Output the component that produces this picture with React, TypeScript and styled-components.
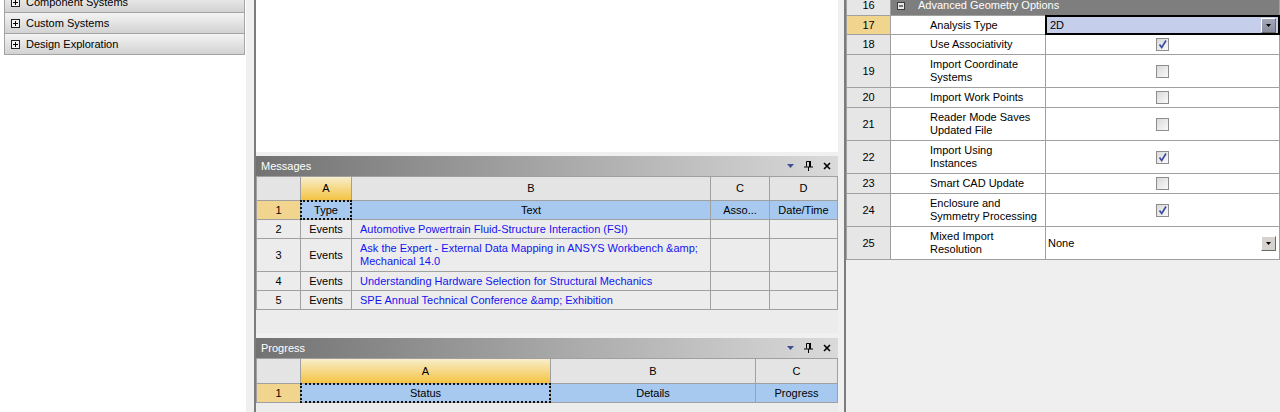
import React from 'react';
import styled, { createGlobalStyle, css } from 'styled-components';

const GlobalStyle = createGlobalStyle`
  html, body {
    margin: 0;
    padding: 0;
    background: #f0f0f0;
  }
  body {
    font-family: 'Liberation Sans', Arial, sans-serif;
    font-size: 11px;
    color: #000;
  }
`;

const GRID_LINE = '#a0a0a0';

const Screen = styled.div`
  display: flex;
  width: 1280px;
  height: 412px;
  overflow: hidden;
  background: #f0f0f0;
`;

/* ---------- toolbox ---------- */

const Toolbox = styled.aside`
  flex: none;
  width: 246px;
  padding-left: 4px;
  box-sizing: border-box;
  background: #fff;
`;

const ToolboxList = styled.div`
  display: flex;
  flex-direction: column;
  width: 241px;
  margin-top: -9px;
`;

const ToolboxGroup = styled.div`
  display: flex;
  align-items: center;
  gap: 6px;
  height: 20px;
  padding-left: 6px;
  border: 1px solid #a3a3a3;
  background: linear-gradient(#f4f4f4, #d2d2d2);

  & + & {
    margin-top: -1px;
  }
`;

/* ---------- centre column ---------- */

const Workspace = styled.main`
  flex: none;
  display: flex;
  flex-direction: column;
  width: 584px;
  margin-left: 8px;
  border-left: 2px solid #7c7c7c;
  box-sizing: border-box;
`;

const Canvas = styled.div`
  flex: none;
  height: 152px;
  background: #fff;
`;

const Pane = styled.section<{ $height?: number; $gap: number }>`
  display: flex;
  flex-direction: column;
  margin-top: ${(p) => p.$gap}px;
  background: #ececec;
  ${(p) =>
    p.$height
      ? css`
          flex: none;
          height: ${p.$height}px;
        `
      : css`
          flex: 1;
        `}
`;

const PaneTitle = styled.header`
  flex: none;
  display: flex;
  align-items: center;
  height: 20px;
  padding: 0 7px 0 5px;
  color: #fff;
  font-size: 11px;
  background: linear-gradient(to right, #727272, #dadada);
`;

const PaneName = styled.span`
  flex: 1;
`;

const PaneTools = styled.div`
  display: flex;
  align-items: center;
  gap: 10px;
`;

/* ---------- sheets ---------- */

const Sheet = styled.div<{ $cols: string; $rows: string }>`
  display: grid;
  grid-template-columns: ${(p) => p.$cols};
  grid-template-rows: ${(p) => p.$rows};
  gap: 1px;
  background: ${GRID_LINE};
  border: 1px solid ${GRID_LINE};
`;

type Tone = 'head' | 'headSel' | 'num' | 'numSel' | 'sel' | 'data' | 'white' | 'group';

const tones: Record<Tone, string> = {
  head: '#e4e4e4',
  headSel: 'linear-gradient(#f8eecb, #f4c343)',
  num: '#e6e6e6',
  numSel: '#f1d58f',
  sel: '#a7c9ef',
  data: '#ececec',
  white: '#fff',
  group: '#7e7e7e',
};

const Cell = styled.div<{ $tone: Tone; $align?: 'left' | 'center'; $pad?: number; $focus?: boolean }>`
  display: flex;
  align-items: center;
  justify-content: ${(p) => (p.$align === 'left' ? 'flex-start' : 'center')};
  padding-left: ${(p) => p.$pad ?? 0}px;
  min-width: 0;
  overflow: hidden;
  white-space: nowrap;
  line-height: 13px;
  background: ${(p) => tones[p.$tone]};
  color: ${(p) => (p.$tone === 'group' ? '#fff' : '#000')};
  ${(p) =>
    p.$focus &&
    css`
      overflow: visible;
      outline: 2px dotted #111;
      outline-offset: -1px;
    `}
`;

const Link = styled.span`
  color: #1414f0;
`;

/* ---------- property inspector ---------- */

const Inspector = styled.aside`
  flex: 1;
  margin-left: 6px;
  border-left: 2px solid #7c7c7c;
  background: #efefef;
`;

const PropSheet = styled(Sheet)`
  margin-top: -5px;
`;

const GroupCell = styled(Cell)`
  grid-column: span 2;
  gap: 13px;
`;

const ValueCell = styled.div<{ $active?: boolean; $align: 'left' | 'center' }>`
  display: flex;
  align-items: center;
  justify-content: ${(p) => (p.$align === 'left' ? 'space-between' : 'center')};
  padding: 0 3px 0 ${(p) => (p.$active ? 4 : 2)}px;
  background: ${(p) => (p.$active ? '#c5cfeb' : '#fff')};
  ${(p) =>
    p.$active &&
    css`
      outline: 2px solid #000;
      outline-offset: -1px;
    `}
`;

const DropButton = styled.span<{ $dark?: boolean }>`
  display: flex;
  align-items: center;
  justify-content: center;
  width: 13px;
  height: 13px;
  border: 1px solid;
  border-color: #fff #6a6a6a #6a6a6a #fff;
  background: ${(p) => (p.$dark ? 'linear-gradient(#a5a8b8, #8b8e9e)' : '#d6d3ce')};
`;

const CheckBox = styled.span`
  display: flex;
  align-items: center;
  justify-content: center;
  width: 11px;
  height: 11px;
  border: 1px solid #8d8d8d;
  background: linear-gradient(135deg, #d9d9d9, #fafafa);
`;

/* ---------- icons ---------- */

const PlusBox = () => (
  <svg width="9" height="9" viewBox="0 0 9 9">
    <rect x="0.5" y="0.5" width="8" height="8" fill="#f4f4f4" stroke="#222" />
    <path d="M2 4.5h5M4.5 2v5" stroke="#000" />
  </svg>
);

const MinusBox = () => (
  <svg width="8" height="8" viewBox="0 0 8 8">
    <rect x="0.5" y="0.5" width="7" height="7" fill="#e8e8e8" stroke="#3c3c3c" />
    <path d="M2 4h4" stroke="#000" />
  </svg>
);

const MenuArrow = () => (
  <svg width="7" height="4" viewBox="0 0 7 4">
    <path d="M0 0h7L3.5 4z" fill="#3f4f93" />
  </svg>
);

const Pin = () => (
  <svg width="9" height="10" viewBox="0 0 9 10">
    <path d="M2.5 0.5h3.5v5M2.5 0.5v5M0 6h9M4.5 6v4" stroke="#000" fill="none" />
    <path d="M5 0v6h2V0z" fill="#000" />
  </svg>
);

const Close = () => (
  <svg width="8" height="8" viewBox="0 0 8 8">
    <path d="M1 1l6 6M7 1L1 7" stroke="#000" strokeWidth="1.6" />
  </svg>
);

const SmallArrow = () => (
  <svg width="5" height="3" viewBox="0 0 5 3">
    <path d="M0 0h5L2.5 3z" fill="#000" />
  </svg>
);

const Check = () => (
  <svg width="11" height="11" viewBox="0 0 11 11">
    <path d="M2.5 5.5l2.2 3L9 1.5" stroke="#3a4aa2" strokeWidth="1.6" fill="none" />
  </svg>
);

/* ---------- data ---------- */

const toolboxGroups = ['Component Systems', 'Custom Systems', 'Design Exploration'];

const messages = [
  { n: 2, text: ['Automotive Powertrain Fluid-Structure Interaction (FSI)'] },
  { n: 3, text: ['Ask the Expert - External Data Mapping in ANSYS Workbench &amp;', 'Mechanical 14.0'] },
  { n: 4, text: ['Understanding Hardware Selection for Structural Mechanics'] },
  { n: 5, text: ['SPE Annual Technical Conference &amp; Exhibition'] },
];

const messageRows = ['23px', '18px', ...messages.map((m) => (m.text.length > 1 ? '32px' : '18px'))].join(' ');

type Property = {
  n: number;
  label: string[];
  select?: string;
  checked?: boolean;
  active?: boolean;
};

const properties: Property[] = [
  { n: 17, label: ['Analysis Type'], select: '2D', active: true },
  { n: 18, label: ['Use Associativity'], checked: true },
  { n: 19, label: ['Import Coordinate', 'Systems'], checked: false },
  { n: 20, label: ['Import Work Points'], checked: false },
  { n: 21, label: ['Reader Mode Saves', 'Updated File'], checked: false },
  { n: 22, label: ['Import Using', 'Instances'], checked: true },
  { n: 23, label: ['Smart CAD Update'], checked: false },
  { n: 24, label: ['Enclosure and', 'Symmetry Processing'], checked: true },
  { n: 25, label: ['Mixed Import', 'Resolution'], select: 'None' },
];

const propRows = [
  '19px',
  ...properties.map((p) => (p.label.length > 1 ? '32px' : p.active ? '18px' : '19px')),
].join(' ');

const lines = (parts: string[]) =>
  parts.map((t, i) => (
    <React.Fragment key={i}>
      {i > 0 && <br />}
      {t}
    </React.Fragment>
  ));

const PaneHeader: React.FC<{ title: string }> = ({ title }) => (
  <PaneTitle>
    <PaneName>{title}</PaneName>
    <PaneTools>
      <MenuArrow />
      <Pin />
      <Close />
    </PaneTools>
  </PaneTitle>
);

const App: React.FC = () => {
  return (
    <>
      <GlobalStyle />
      <Screen>
        <Toolbox>
          <ToolboxList>
            {toolboxGroups.map((g) => (
              <ToolboxGroup key={g}>
                <PlusBox />
                {g}
              </ToolboxGroup>
            ))}
          </ToolboxList>
        </Toolbox>

        <Workspace>
          <Canvas />

          <Pane $gap={4} $height={177}>
            <PaneHeader title="Messages" />
            <Sheet $cols="43px 50px 358px 58px 67px" $rows={messageRows}>
              <Cell $tone="head" />
              <Cell $tone="headSel">A</Cell>
              <Cell $tone="head">B</Cell>
              <Cell $tone="head">C</Cell>
              <Cell $tone="head">D</Cell>

              <Cell $tone="numSel">1</Cell>
              <Cell $tone="sel" $focus>
                Type
              </Cell>
              <Cell $tone="sel">Text</Cell>
              <Cell $tone="sel">Asso...</Cell>
              <Cell $tone="sel">Date/Time</Cell>

              {messages.map((m) => (
                <React.Fragment key={m.n}>
                  <Cell $tone="data">{m.n}</Cell>
                  <Cell $tone="data">Events</Cell>
                  <Cell $tone="data" $align="left" $pad={8}>
                    <Link>{lines(m.text)}</Link>
                  </Cell>
                  <Cell $tone="data" />
                  <Cell $tone="data" />
                </React.Fragment>
              ))}
            </Sheet>
          </Pane>

          <Pane $gap={5}>
            <PaneHeader title="Progress" />
            <Sheet $cols="43px 249px 204px 81px" $rows="24px 18px">
              <Cell $tone="head" />
              <Cell $tone="headSel">A</Cell>
              <Cell $tone="head">B</Cell>
              <Cell $tone="head">C</Cell>

              <Cell $tone="numSel">1</Cell>
              <Cell $tone="sel" $focus>
                Status
              </Cell>
              <Cell $tone="sel">Details</Cell>
              <Cell $tone="sel">Progress</Cell>
            </Sheet>
          </Pane>
        </Workspace>

        <Inspector>
          <PropSheet $cols="43px 154px 1fr" $rows={propRows}>
            <Cell $tone="num">16</Cell>
            <GroupCell $tone="group" $align="left" $pad={6}>
              <MinusBox />
              Advanced Geometry Options
            </GroupCell>

            {properties.map((p) => (
              <React.Fragment key={p.n}>
                <Cell $tone={p.active ? 'numSel' : 'num'}>{p.n}</Cell>
                <Cell $tone="white" $align="left" $pad={39}>
                  <span>{lines(p.label)}</span>
                </Cell>
                {p.select !== undefined ? (
                  <ValueCell $active={p.active} $align="left">
                    {p.select}
                    <DropButton $dark={p.active}>
                      <SmallArrow />
                    </DropButton>
                  </ValueCell>
                ) : (
                  <ValueCell $align="center">
                    <CheckBox>{p.checked && <Check />}</CheckBox>
                  </ValueCell>
                )}
              </React.Fragment>
            ))}
          </PropSheet>
        </Inspector>
      </Screen>
    </>
  );
};

export default App;
